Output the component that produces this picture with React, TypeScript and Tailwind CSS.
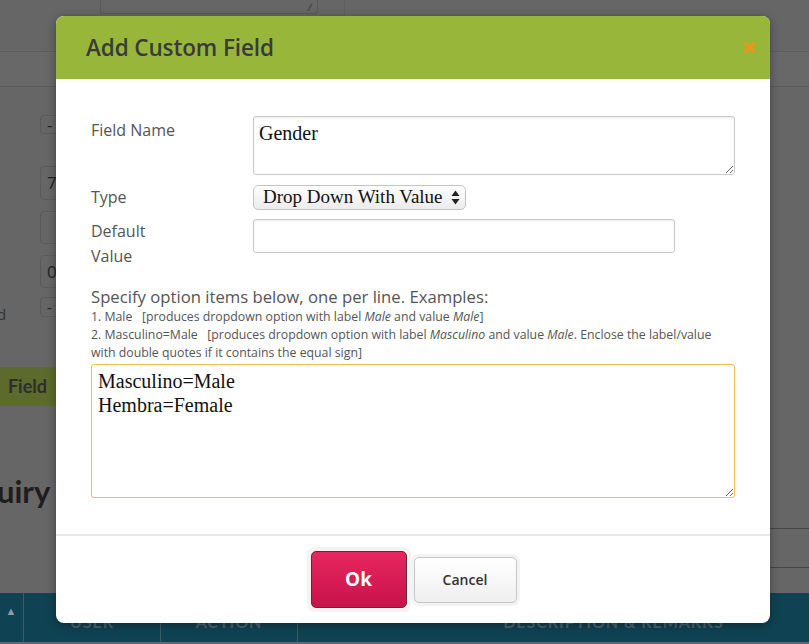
import React from "react";

const sans = { fontFamily: "'Open Sans', Lato, sans-serif" };

function Box({ h, mt, children }: { h: string; mt: string; children?: React.ReactNode }) {
  return (
    <div className={`${mt} ${h} flex items-center`}>
      <div className={`ml-[40px] ${h} w-[40px] rounded-[4px] border border-[#5a5a5a] pl-[6px] flex items-center text-[17px] text-[#222]`}>{children}</div>
    </div>
  );
}

export default function App() {
  return (
    <div className="relative h-[644px] w-[809px] overflow-hidden bg-[#666]" style={sans}>
      {/* page behind the overlay */}
      <div className="flex h-[644px] flex-col">
        <div className="flex h-[52px] shrink-0 border-b border-[#5b5b5b]">
          <div className="ml-[100px] h-[14px] w-[218px] rounded-b-[3px] border border-t-0 border-[#595959] relative">
            <span className="absolute right-[6px] bottom-[1px] text-[9px] leading-none text-[#3c3c3c]">⁄⁄</span>
          </div>
          <div className="ml-[26px] h-[52px] border-l border-[#5d5d5d]" />
        </div>
        <div className="h-[35px] shrink-0 border-b border-[#5b5b5b] bg-[#686868]" />
        <Box mt="mt-[28px]" h="h-[19px]">-</Box>
        <Box mt="mt-[32px]" h="h-[34px]">7</Box>
        <Box mt="mt-[11px]" h="h-[33px]" />
        <Box mt="mt-[11px]" h="h-[33px]">0</Box>
        <div className="mt-[9px] flex h-[20px] items-center">
          <span className="w-[40px] pt-[14px] text-[15px] text-[#333] -ml-[3px]">d</span>
          <div className="ml-[3px] flex h-[20px] w-[40px] items-center rounded-[4px] border border-[#5a5a5a] pl-[6px] text-[15px] text-[#222]">-</div>
        </div>
        <div className="mt-[50px] flex h-[39px] w-[56px] items-center justify-end rounded-r-[3px] bg-[#5c6a2b] pr-[9px] text-[18px] font-bold text-[#2e2e2e]" style={{ fontFamily: "Lato, sans-serif" }}>Field</div>
        <div className="mt-[70px] h-[30px] whitespace-nowrap -ml-[3px] text-[31px] font-bold leading-[30px] text-[#1e1e1e]" style={{ fontFamily: "Lato, sans-serif" }}>uiry Log</div>
        <div className="mt-[22px] ml-[400px] h-[40px] border-y border-[#454545]" />
        <div className="mt-[25px] flex h-[49px] shrink-0 bg-[#0f4252] text-[16px] font-bold tracking-[0.06em] text-[#46656f]" style={{ fontFamily: "Lato, sans-serif" }}>
          <div className="flex w-[23px] justify-center pt-[10px] text-[11px] text-[#8a9ea4]">▲</div>
          <div className="flex w-[137px] justify-center border-l border-[#3a5d68] pt-[19px] leading-[20px]">USER</div>
          <div className="flex w-[137px] justify-center border-l border-[#3a5d68] pt-[19px] leading-[20px]">ACTION</div>
          <div className="flex flex-1 justify-center border-l border-[#3a5d68] pt-[19px] pl-[120px] leading-[20px]">DESCRIPTION &amp; REMARKS</div>
        </div>
      </div>

      {/* modal */}
      <div className="absolute left-[56px] top-[16px] flex h-[607px] w-[714px] flex-col overflow-hidden rounded-[8px] bg-white shadow-[0_2px_10px_rgba(0,0,0,0.35)]">
        <div className="flex h-[63px] shrink-0 items-center justify-between bg-[#98b73a] pl-[30px] pr-[15px]">
          <h2 className="text-[22.5px] font-semibold tracking-[-0.005em] text-[#3a3a3a]">Add Custom Field</h2>
          <svg width="11" height="11" viewBox="0 0 11 11">
            <path d="M1.8 1.8 L9.2 9.2 M9.2 1.8 L1.8 9.2" stroke="#f39419" strokeWidth="3.2" strokeLinecap="round" />
          </svg>
        </div>

        <div className="flex flex-col border-b-2 border-[#e8e8e8] px-[35px] pt-[37px] pb-[36px] text-[#555]">
          <div className="flex">
            <label className="w-[162px] pt-[2px] text-[16px] leading-[25px]">Field Name</label>
            <textarea
              readOnly
              defaultValue="Gender"
              className="h-[59px] w-[482px] rounded-[3px] border border-[#c9c9c9] px-[5px] py-[4px] text-[20px] leading-[24px] text-[#111] shadow-[inset_0_1px_2px_rgba(0,0,0,0.08)] outline-none"
              style={{ fontFamily: "'Liberation Serif', serif" }}
            />
          </div>
          <div className="mt-[10px] flex">
            <label className="w-[162px] text-[16px] leading-[25px]">Type</label>
            <div
              className="flex h-[25px] w-[213px] items-center justify-between rounded-[5px] border border-[#c4c4c4] bg-gradient-to-b from-[#fdfdfd] to-[#ececec] pl-[9px] pr-[5px] text-[19px] text-[#111]"
              style={{ fontFamily: "'Liberation Serif', serif" }}
            >
              <span>Drop Down With Value</span>
              <svg width="9" height="15" viewBox="0 0 9 15">
                <path d="M4.5 0.5 L8.5 6 L0.5 6 Z M0.5 9 L8.5 9 L4.5 14.5 Z" fill="#222" />
              </svg>
            </div>
          </div>
          <div className="mt-[9px] flex">
            <label className="w-[162px] text-[16px] leading-[25px]">Default<br />Value</label>
            <input readOnly className="h-[34px] w-[422px] rounded-[3px] border border-[#c9c9c9] shadow-[inset_0_1px_2px_rgba(0,0,0,0.08)] outline-none" />
          </div>
          <p className="mt-[17px] text-[16.7px] leading-[22px]">Specify option items below, one per line. Examples:</p>
          <div className="text-[12.3px] leading-[18px] whitespace-pre-wrap">
            <p>1. Male   [produces dropdown option with label <i>Male</i> and value <i>Male</i>]</p>
            <p>2. Masculino=Male   [produces dropdown option with label <i>Masculino</i> and value <i>Male</i>. Enclose the label/value with double quotes if it contains the equal sign]</p>
          </div>
          <textarea
            readOnly
            defaultValue={"Masculino=Male\nHembra=Female"}
            className="mt-[2px] h-[134px] w-[644px] rounded-[3px] border-[1.5px] border-[#f6bb4f] px-[6px] py-[4px] text-[20px] leading-[24px] text-[#111] outline-none"
            style={{ fontFamily: "'Liberation Serif', serif" }}
          />
        </div>

        <div className="flex flex-1 items-center justify-center">
          <div className="rounded-[8px] bg-[#f3f3f3] p-[4px]">
            <button className="h-[57px] w-[96px] rounded-[5px] border border-[#5b2b38] bg-gradient-to-b from-[#e8265f] to-[#c8124a] text-[19px] font-bold text-white">Ok</button>
          </div>
          <div className="rounded-[8px] bg-[#f3f3f3] p-[3px]">
            <button className="h-[46px] w-[103px] rounded-[5px] border border-[#c6c6c6] bg-gradient-to-b from-[#ffffff] to-[#efefef] text-[14px] font-semibold text-[#333]">Cancel</button>
          </div>
        </div>
      </div>
    </div>
  );
}
